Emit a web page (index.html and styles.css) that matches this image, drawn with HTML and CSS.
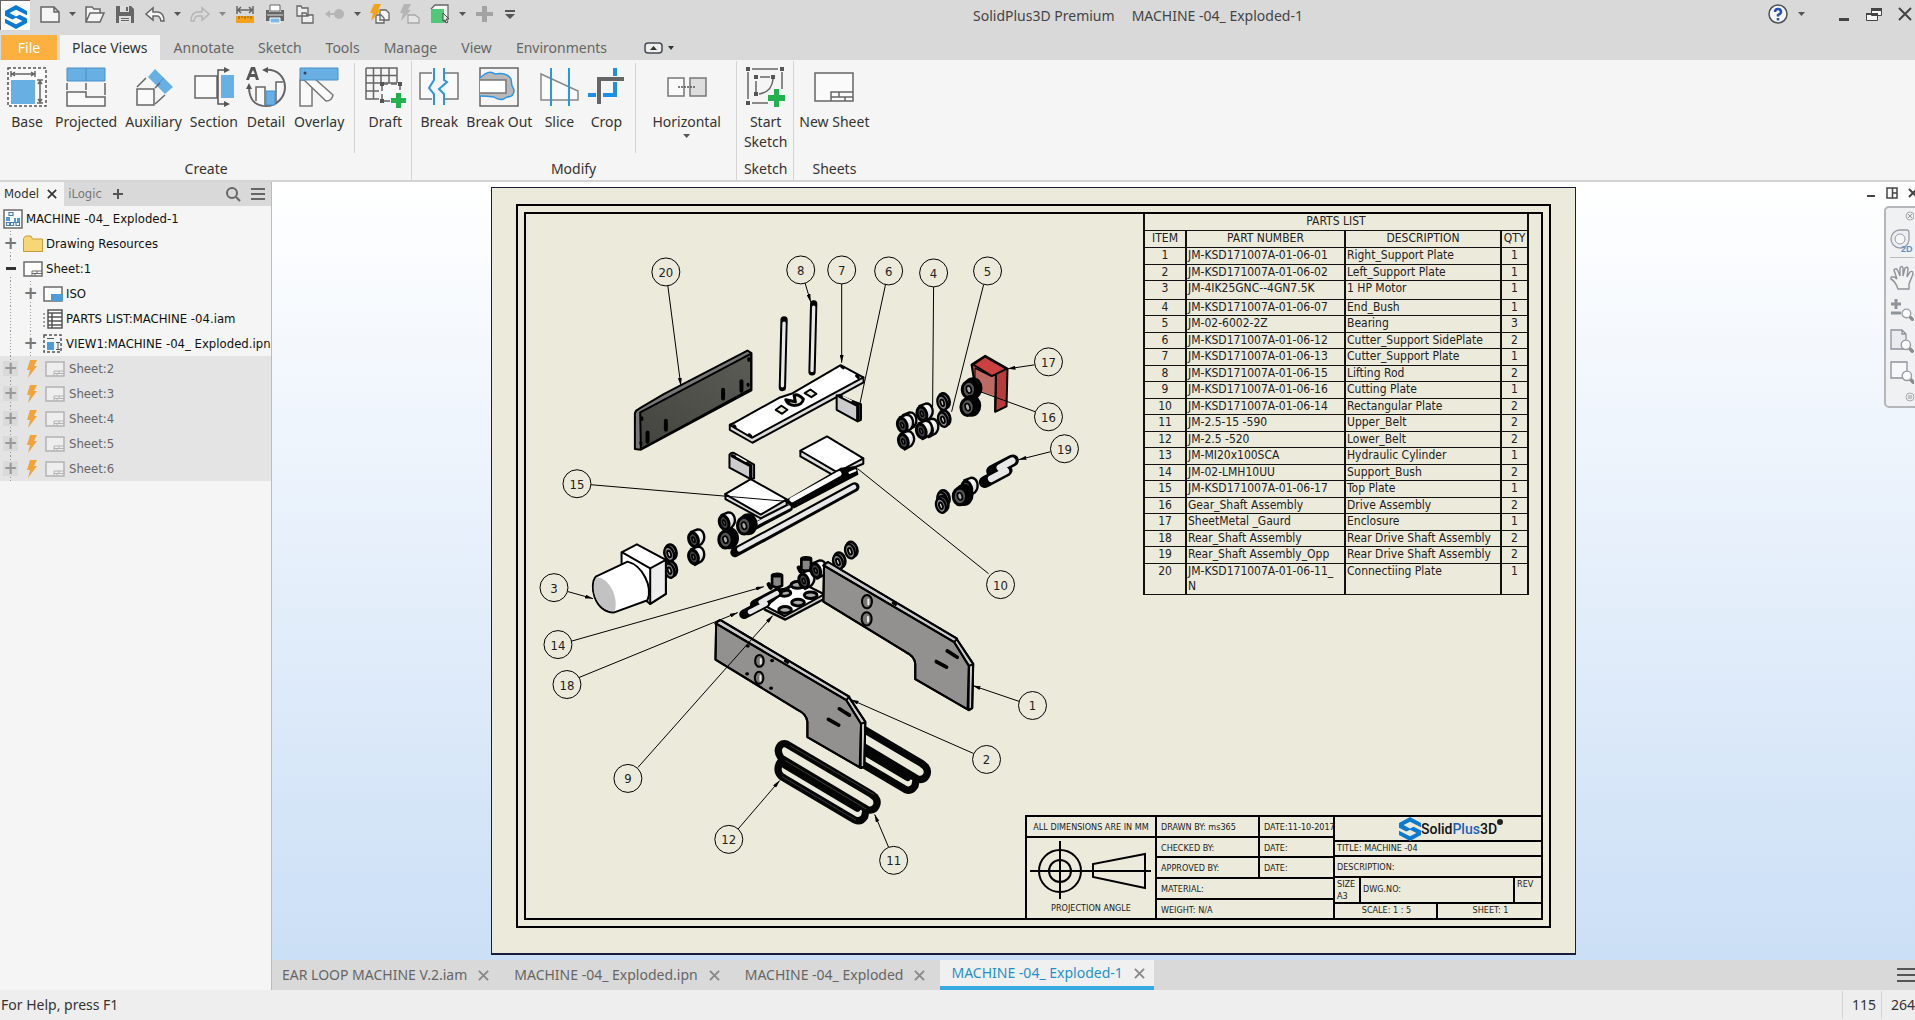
FILE: index.html
```html
<!DOCTYPE html>
<html lang="en">
<head>
<meta charset="utf-8">
<title>SolidPlus3D Premium - MACHINE -04_ Exploded-1</title>
<link rel="stylesheet" href="styles.css">
</head>
<body>
<svg class="defs" width="0" height="0" aria-hidden="true">
  <symbol id="logo" viewBox="0 0 24 26">
    <path fill="#0b7ad1" d="M12 0 24 6.500V11L12 5 5 8.700 12 12.500 16 10.500 24 14.500V19.500L12 26 0 19.500V15L12 21 19 17.300 12 13.800 8 15.600 0 11.500V6.500Z"/>
  </symbol>
  <symbol id="sheet" viewBox="0 0 20 16">
    <path fill="#fff" stroke="#6b6b6b" stroke-width="1.500" d="M1 1H19V15H1Z"/>
    <path fill="none" stroke="#6b6b6b" d="M9 15V10H19M9 12.500H19M14 10V12.500M12 12.500V15"/>
  </symbol>
  <symbol id="bolt" viewBox="0 0 12 18"><path fill="#f0a53c" d="M4 0H11L8 6H11L2 18 4 10H1Z"/></symbol>
  <symbol id="magnifier" viewBox="0 0 12 12"><path stroke="#8c8c8c" stroke-width="3" d="M8 8 11.500 11.500"/><circle cx="5" cy="5" r="4" fill="#f8fcfc" stroke="#9a9da0" stroke-width="1.200"/></symbol>
  <symbol id="cross" viewBox="0 0 12 12"><path fill="none" stroke="currentColor" stroke-width="2" d="M1 1 11 11M11 1 1 11"/></symbol>
</svg>

<div class="app">
  <header class="titlebar">
    <nav class="quick" aria-label="Quick access">
      <span class="brand"><svg width="22" height="24"><use href="#logo"/></svg></span>
      <button aria-label="New"><svg viewBox="0 0 20 20"><path fill="#f5f5f5" stroke="#666" stroke-width="1.500" d="M1 3H14L19 8V18H1ZM14 3V8H19"/></svg></button>
      <button class="caret" aria-label="New options"></button>
      <button aria-label="Open"><svg viewBox="0 0 20 20"><path fill="#f5f5f5" stroke="#666" stroke-width="1.500" d="M1 18V3H7L9 5H15V9H19L15 18ZM1 18 5 9H15"/></svg></button>
      <button aria-label="Save"><svg viewBox="0 0 20 20"><path fill="#666" d="M1 2H16L19 5V19H1Z"/><path fill="#ddd" d="M5 2H14V8H5ZM4 12H16V19H4Z"/><path fill="#666" d="M11 3H13V7H11ZM6 14H14V15H6ZM6 16H14V17H6Z"/></svg></button>
      <button aria-label="Undo"><svg viewBox="0 0 20 20"><path fill="#f5f5f5" stroke="#666" stroke-width="1.500" d="M1 10 8 4V8H13Q19 9 19 17H16Q15 12 12 12H8V16Z"/></svg></button>
      <button class="caret" aria-label="Undo options"></button>
      <button aria-label="Redo"><svg viewBox="0 0 20 20"><path fill="none" stroke="#b5b5b5" stroke-width="1.500" d="M19 10 12 4V8H7Q1 9 1 17H4Q5 12 8 12H12V16Z"/></svg></button>
      <button class="caret dim" aria-label="Redo options"></button>
      <button aria-label="Measure"><svg viewBox="0 0 20 20"><path fill="none" stroke="#666" stroke-width="1.500" d="M2 2V10M18 2V10M3 6H17M6 3 3 6 6 9M14 3 17 6 14 9"/><path fill="#f5a21b" d="M1 12H19V19H1Z"/><path stroke="#8a5b10" d="M4 12V15M7 12V14M10 12V15M13 12V14M16 12V15"/></svg></button>
      <button aria-label="Print"><svg viewBox="0 0 20 20"><path fill="#fff" stroke="#666" d="M5 1H15V7H5Z"/><path fill="#666" d="M1 6H4V8H16V6H19V17H1Z"/><path stroke="#ddd" d="M2 11H18"/><path fill="#7db8e8" stroke="#fff" d="M5 14H15V19H5Z"/></svg></button>
      <button aria-label="Windows"><svg viewBox="0 0 20 20"><path fill="#eee" stroke="#666" stroke-width="1.300" d="M2 2H6L7 4H13V12H2ZM7 9H11L12 11H18V19H7Z"/></svg></button>
      <button aria-label="Record"><svg viewBox="0 0 20 20"><circle cx="14" cy="10" r="5" fill="#b5b5b5"/><path fill="#b5b5b5" d="M0 10 5 6V9H9V11H5V14Z"/></svg></button>
      <button class="caret" aria-label="Record options"></button>
      <button aria-label="Update"><svg viewBox="0 0 20 20"><path fill="#f5f5f5" stroke="#666" stroke-width="1.300" d="M10 6H16L19 9V16H10ZM6 11H11L14 14V19H6Z"/><path fill="#f5a21b" d="M4 0H11L8 6H11L1 17 3 9H0Z"/></svg></button>
      <button aria-label="Update sheet"><svg viewBox="0 0 20 20"><path fill="#b5b5b5" d="M4 0H11L8 6H11L1 17 3 9H0Z"/><path fill="#e4e4e4" stroke="#a8a8a8" stroke-width="1.300" d="M8 11H15L19 14V19H8Z"/></svg></button>
      <button aria-label="Select"><svg viewBox="0 0 20 20"><path fill="#f5f5f5" stroke="#666" stroke-width="1.300" d="M1 5 5 1H18V14L14 18"/><path fill="#50c878" d="M1 5H14V19H1Z"/><path fill="#eee" stroke="#444" d="M13 9 19 15H16L18 18 16 19 15 16 13 17Z"/></svg></button>
      <button class="caret" aria-label="Select options"></button>
      <button aria-label="Add"><svg viewBox="0 0 20 20"><path fill="#a3a3a3" d="M7 2H12V8H18V12H12V18H7V12H1V8H7Z"/></svg></button>
      <button aria-label="Customize"><svg viewBox="0 0 20 20"><path fill="#555" d="M0 6H10V8H0ZM0 10H10L5 15Z"/></svg></button>
    </nav>
    <div class="caption"><span>SolidPlus3D Premium</span><span>MACHINE -04_ Exploded-1</span></div>
    <div class="winctl">
      <button aria-label="Help"><svg width="20" height="20"><circle cx="10" cy="10" r="9" fill="#f4f6fa" stroke="#4a4f58" stroke-width="1.500"/><path fill="none" stroke="#2951b4" stroke-width="2.500" d="M7 8Q7 5 10 5T13 8Q13 9.500 10 11V12.500"/><path stroke="#2951b4" stroke-width="2.500" d="M10 14V16.500"/></svg></button>
      <button class="caret" aria-label="Help options"></button>
      <button class="min" aria-label="Minimize"><svg width="12" height="16"><path fill="#444" d="M1 12H11V15H1Z"/></svg></button>
      <button aria-label="Restore"><svg width="16" height="16"><path fill="#f5f5f5" stroke="#444" d="M5.500 2.500H15.500V9.500H5.500ZM.5 7.500H11.500V14.500H.5Z"/><path fill="#444" d="M5 2H16V5H5ZM0 7H12V9H0Z"/></svg></button>
      <button aria-label="Close"><svg width="14" height="16"><path stroke="#444" stroke-width="2" d="M1 2 13 14M13 2 1 14"/></svg></button>
    </div>
  </header>

  <nav class="tabs" aria-label="Ribbon tabs">
    <button class="file">File</button>
    <button class="on">Place Views</button>
    <button>Annotate</button><button>Sketch</button><button>Tools</button><button>Manage</button><button>View</button><button>Environments</button>
    <button class="fold" aria-label="Collapse ribbon"><svg width="30" height="12"><rect x="1" y="1" width="17" height="10" rx="3" fill="#eee" stroke="#444b55" stroke-width="1.500"/><path fill="#333" d="M6 8 9.500 4 13 8ZM24 4H30L27 8Z"/></svg></button>
  </nav>

  <section class="ribbon">
    <div class="panel create">
      <div class="tools">
        <button><svg viewBox="0 0 40 40"><rect x="1" y="1" width="38" height="38" fill="#fafafa" stroke="#555" stroke-width="1.500" stroke-dasharray="3 2"/><path fill="#68afe4" d="M4 13H28V37H4Z"/><path fill="none" stroke="#666" stroke-width="1.500" d="M4 4V10M28 4V10M5 7H27M8 5 5 7 8 9M24 5 27 7 24 9M30 13H36M30 36H36M33 14V35M31 17 33 14 35 17M31 32 33 35 35 32"/></svg>Base</button>
        <button><svg viewBox="0 0 40 40"><path fill="#68afe4" stroke="#4b8fc8" d="M1 1H39V14H1ZM20 1V14"/><path fill="#fafafa" stroke="#666" stroke-width="1.500" d="M1 25H20V30H39V39H1Z"/><path stroke="#666" stroke-width="1.500" d="M1 16V23M20 16V23M39 16V28"/></svg>Projected</button>
        <button><svg viewBox="0 0 40 40"><path fill="#68afe4" d="M21 2 39 20 31 27 14 10Z"/><path stroke="#4b8fc8" d="M30 11 23 18"/><path fill="#fafafa" stroke="#666" stroke-width="1.500" d="M3 22H20V38H3Z"/><path stroke="#666" stroke-width="1.500" d="M3 20 12 11M21 21 26 16M21 37 31 28"/></svg>Auxiliary</button>
        <button><svg viewBox="0 0 40 40"><path fill="#fafafa" stroke="#666" stroke-width="1.500" d="M1 9H23V31H1Z"/><path fill="#68afe4" d="M27 8H40V31H27Z"/><path fill="none" stroke="#555" stroke-width="1.500" d="M34 3H24V37H34"/><path fill="#555" d="M30 0 36 3 30 6ZM30 34 36 37 30 40Z"/></svg>Section</button>
        <button><svg viewBox="0 0 40 40"><path fill="none" stroke="#666" stroke-width="2" d="M18 3C31 1 39 10 39 20S31 39 20 39 3 32 3 20"/><path fill="#555" d="M16 3 22 0V6ZM0 22 3 16 6 22ZM0 13 5 0H9L13 13H10L9 10H4L3 13ZM5 7H9L7 3Z"/><path fill="#fafafa" stroke="#666" stroke-width="1.500" d="M10 34V20H19V39M30 36V15H37"/><path fill="#68afe4" stroke="#4b8fc8" d="M20 24H29V38H20Z"/></svg>Detail</button>
        <button><svg viewBox="0 0 40 40"><path fill="#fafafa" stroke="#777" stroke-width="1.500" d="M1 13H13V39H1Z"/><path fill="#fafafa" stroke="#777" stroke-width="1.500" d="M4 12H16L34 28Q33 34 27 34Z"/><path fill="#68afe4" stroke="#4b8fc8" d="M1 1H39V13H1Z"/><circle cx="6" cy="6" r="1.500" fill="#345"/></svg>Overlay</button>
        <i class="rule"></i>
        <button><svg viewBox="0 0 40 40"><path fill="none" stroke="#666" stroke-width="1.500" d="M1 1H32V16M1 1V32H14M1 8.500H32M1 16H32M1 24H14M8.500 1V32M16 1V16M24 1V16"/><path fill="#fafafa" stroke="#666" stroke-dasharray="6 3" stroke-width="1.500" d="M17 17H35V34H17Z"/><path fill="#555" d="M15 15H19V19H15ZM33 15H37V19H33ZM15 32H19V36H15Z"/><path fill="#22b14c" d="M31 26H36V31H41V36H36V41H31V36H26V31H31Z"/></svg>Draft</button>
      </div>
      <h2>Create</h2>
    </div>
    <div class="panel modify">
      <div class="tools">
        <button><svg viewBox="0 0 40 40"><path fill="#fafafa" stroke="#777" stroke-width="1.500" d="M13 6H1V32H13M26 6H39V32H26"/><path fill="#fafafa" stroke="#2b95e8" stroke-width="2" d="M15 1V13L10 21 15 27V38M25 1V13L28 15 20 22 25 27V38"/></svg>Break</button>
        <button><svg viewBox="0 0 40 40"><path fill="#f5f5f5" stroke="#666" stroke-width="1.500" d="M1 1H39V39H1Z"/><path fill="#b9b9b9" stroke="#2b95e8" stroke-width="1.500" d="M1 11Q10 2 16 7 28 5 32 12 32 18 35 23 35 30 28 30 22 35 15 30 8 29 1 29"/><path fill="#fff" stroke="#777" stroke-width="1.500" d="M1 13H27V26H1"/></svg>Break Out</button>
        <button><svg viewBox="0 0 40 40"><path fill="#fafafa" stroke="#888" stroke-width="1.500" d="M2 7 39 24V33H2Z"/><path stroke="#2b95e8" stroke-width="2" d="M12 1V39M30 1V39"/></svg>Slice</button>
        <button><svg viewBox="0 0 40 40"><path fill="none" stroke="#1c8fe8" stroke-width="4" d="M29 1V9M29 15V28H17M10 28H2"/><path fill="none" stroke="#666" stroke-width="4" d="M13 37V12H38"/></svg>Crop</button>
        <i class="rule"></i>
        <button class="horiz"><svg viewBox="0 0 40 40"><path fill="#fafafa" stroke="#777" stroke-width="1.500" d="M1 11H17V29H1Z"/><path fill="#ddd" stroke="#777" stroke-width="1.500" d="M23 11H39V29H23Z"/><path stroke="#555" stroke-width="1.500" stroke-dasharray="2 1" d="M11 20H29"/></svg>Horizontal<span class="caret"></span></button>
      </div>
      <h2>Modify</h2>
    </div>
    <div class="panel sketch">
      <div class="tools">
        <button><svg viewBox="0 0 40 40"><path fill="none" stroke="#666" stroke-width="1.500" d="M2 5V32M6 2H32M36 5V22M6 36H22M10 14V25M14 10H24M27 12Q26 25 13 27"/><path fill="#555" d="M0 0H4V4H0ZM34 0H38V4H34ZM0 34H4V38H0ZM8 8H12V12H8ZM25 8H29V12H25ZM8 25H12V29H8Z"/><path fill="#22b14c" d="M28 22H33V28H39V34H33V40H28V34H22V28H28Z"/></svg>Start<br>Sketch</button>
      </div>
      <h2>Sketch</h2>
    </div>
    <div class="panel sheets">
      <div class="tools">
        <button><svg viewBox="0 0 40 40"><path fill="#fafafa" stroke="#666" stroke-width="1.500" d="M1 6H39V34H1Z"/><path fill="none" stroke="#666" stroke-width="1.500" d="M17 34V25H39M17 30H39M25 25V30M31 30V34"/></svg>New Sheet</button>
      </div>
      <h2>Sheets</h2>
    </div>
  </section>

  <main class="work">
    <aside class="browser">
      <div class="browser-tabs">
        <button class="on">Model <svg width="10" height="10"><use href="#cross"/></svg></button>
        <button>iLogic</button>
        <button aria-label="Add tab"><svg width="12" height="12"><path stroke="#555" stroke-width="2" d="M6 1V11M1 6H11"/></svg></button>
        <span class="grow"></span>
        <button aria-label="Search"><svg width="16" height="16"><circle cx="7" cy="7" r="5" fill="none" stroke="#666" stroke-width="2"/><path stroke="#666" stroke-width="2" d="M11 11 15 15"/></svg></button>
        <button aria-label="Menu"><svg width="14" height="12"><path stroke="#666" stroke-width="2" d="M0 1H14M0 6H14M0 11H14"/></svg></button>
      </div>
      <ul class="tree">
        <li class="root"><svg width="20" height="20" viewBox="0 0 20 20"><path fill="#fff" stroke="#6b6b6b" stroke-width="1.500" d="M1 1H19V19H1Z"/><path fill="#4d9ddb" d="M3 8H7V12H3ZM11 9H13V14H11ZM14 9H17V13H14Z"/><path fill="none" stroke="#4f7fb0" stroke-width="1.200" d="M6 3.500H10V6.500H6ZM3.500 13.500H6.500V16.500H3.500ZM7.500 13.500H10.500V16.500H7.500ZM13 13.500H16.500V16.500H13Z"/></svg>MACHINE -04_ Exploded-1</li>
        <li class="l1"><button class="tog" aria-label="Expand">+</button><svg width="20" height="18"><path fill="#f7d675" stroke="#c79a3a" d="M.5 3.500 2.500 1H8L9.500 4H19.500V16.500H.5Z"/></svg>Drawing Resources</li>
        <li class="l1"><button class="tog minus" aria-label="Collapse"></button><svg width="20" height="16"><use href="#sheet"/></svg>Sheet:1</li>
        <li class="l2"><button class="tog" aria-label="Expand">+</button><svg width="20" height="16"><path fill="#fff" stroke="#6b6b6b" stroke-width="1.500" d="M1 1H19V15H1Z"/><path fill="#4d9ddb" d="M8 8H20V15H8Z"/></svg>ISO</li>
        <li class="l2"><span class="stub"></span><svg width="20" height="20"><path fill="#fff" stroke="#555" stroke-width="1.500" d="M5 1H19V19H5Z"/><path stroke="#555" stroke-width="1.500" d="M5 4H19M5 8H19M5 12H19M5 16H19M9 4V19"/><path stroke="#555" stroke-dasharray="2 2" d="M1 4V18"/></svg>PARTS LIST:MACHINE -04.iam</li>
        <li class="l2"><button class="tog" aria-label="Expand">+</button><svg width="20" height="20"><path fill="none" stroke="#555" stroke-dasharray="3 2" stroke-width="1.500" d="M1 1H18V18H1Z"/><path fill="#4d9ddb" d="M4 8H11V16H4Z"/><path stroke="#555" d="M4 4.500H11M13 8.500H17M13 15.500H17M15 9V15"/></svg>VIEW1:MACHINE -04_ Exploded.ipn</li>
        <li class="l1 off"><button class="tog" aria-label="Expand">+</button><svg class="bolt" width="12" height="18"><use href="#bolt"/></svg><svg class="pale" width="20" height="16"><use href="#sheet"/></svg>Sheet:2</li>
        <li class="l1 off"><button class="tog" aria-label="Expand">+</button><svg class="bolt" width="12" height="18"><use href="#bolt"/></svg><svg class="pale" width="20" height="16"><use href="#sheet"/></svg>Sheet:3</li>
        <li class="l1 off"><button class="tog" aria-label="Expand">+</button><svg class="bolt" width="12" height="18"><use href="#bolt"/></svg><svg class="pale" width="20" height="16"><use href="#sheet"/></svg>Sheet:4</li>
        <li class="l1 off"><button class="tog" aria-label="Expand">+</button><svg class="bolt" width="12" height="18"><use href="#bolt"/></svg><svg class="pale" width="20" height="16"><use href="#sheet"/></svg>Sheet:5</li>
        <li class="l1 off"><button class="tog" aria-label="Expand">+</button><svg class="bolt" width="12" height="18"><use href="#bolt"/></svg><svg class="pale" width="20" height="16"><use href="#sheet"/></svg>Sheet:6</li>
      </ul>
    </aside>

    <section class="view">
      <div class="canvas">
        <article class="sheet">
          <div class="border"><div class="frame">
            <svg class="drawing" viewBox="525 214 1016 705" role="img" aria-label="Exploded view of MACHINE -04">
              <defs>
                <marker id="arrow" viewBox="0 0 8 4" refX="8" refY="2" markerWidth="8" markerHeight="4" orient="auto"><path d="M0 0 8 2 0 4Z"/></marker>
                <linearGradient id="steel" x1="0" y1="0" x2="1" y2="1"><stop offset="0" stop-color="#aaa"/><stop offset=".4" stop-color="#fff"/><stop offset="1" stop-color="#bbb"/></linearGradient>
                <linearGradient id="dark" x1="0" y1="1" x2="1" y2="0"><stop offset="0" stop-color="#44443f"/><stop offset="1" stop-color="#5c5c57"/></linearGradient>
                <g id="bush"><path fill="url(#steel)" stroke="#000" stroke-width="7" d="M-8-23 12-31C31-31 40-5 24 13L4 24Z"/><ellipse rx="14" ry="21" fill="#444" stroke="#000" stroke-width="9" transform="rotate(-18)"/><ellipse rx="4" ry="8" fill="#777" stroke="#000" stroke-width="5" transform="rotate(-18)"/></g>
                <g id="ring"><ellipse cx="7" cy="-4" rx="16" ry="23" fill="#777" stroke="#000" stroke-width="8" transform="rotate(-18)"/><ellipse rx="14" ry="22" fill="#888" stroke="#000" stroke-width="7" transform="rotate(-18)"/><ellipse rx="5" ry="10" fill="#ddd" stroke="#000" stroke-width="6" transform="rotate(-18)"/></g>
                <g id="gear"><ellipse cx="12" cy="-4" rx="26" ry="30" stroke="#000" stroke-width="6"/><ellipse rx="20" ry="25" fill="#555" stroke="#000" stroke-width="9"/><ellipse rx="7" ry="11" fill="#aaa" stroke="#000" stroke-width="5" transform="rotate(-18)"/></g>
                <g id="plate"><path fill="#c9c9c9" d="M103 252 118 241 503 470 554 547 551 680 541 686Z"/><path fill="#929190" d="M106 252 497 482 541 553 537 684 380 593V547C378 530 366 518 352 512L104 360Z"/><path fill="none" d="M118 241 503 470 554 547 551 680 541 686 380 593V547C378 530 366 518 352 512L104 360 106 248ZM106 252 497 482 541 553 540 685M497 482 506 471M541 553 554 548"/><path stroke-width="11" d="M476 508 506 527M443 540 474 557"/><path stroke-width="8" d="M313 364 321 369"/></g>
                <g id="belt" fill="none" stroke="#050505" stroke-width="22"><path d="M296 672C286 694 296 709 310 716L523 842Q540 850 552 832L556 812"/><path d="M318 614C300 606 282 630 301 656L560 811C586 818 596 790 584 774L572 764Z"/><path d="M312 676 530 806"/></g>
                <g id="slab"><path fill="#ddd" d="M597 555V570L665 609 999 428 998 412Z"/><path fill="#fff" d="M598 556 745 474 782 462 930 376 998 413 663 594Z"/></g>
              </defs>

              <g class="solid" transform="translate(530 240) scale(.3333)">
                <path fill="#777" d="M312 520Q316 510 326 506L400 462 650 332 662 340V452L330 630 312 628Z"/>
                <path fill="url(#dark)" d="M328 518 661 341V447L330 628Z"/>
                <path stroke-width="12" d="M350 578V606M405 543V570M577 450V476M632 424V453"/><path stroke-width="9" d="M333 534V539M330 608V612M654 357V362M652 433V437"/>
                <path class="rod" d="M760 240 755 443M849 192 844 396"/><path class="rodin" d="M760 250 755 438M849 202 844 392"/>
                <use href="#slab"/>
                <path stroke-width="9" d="M610 558 613 562M655 585 660 589M933 380 938 384M978 408 983 413"/>
                <path fill="#ebeadb" d="M735 510 752 498 770 510 754 522ZM822 460 839 449 857 462 842 472Z"/><path fill="#ebeadb" stroke-width="9" d="M765 480C775 505 815 500 818 478Q803 462 790 466L794 486Z"/>
                <path fill="#ccc" d="M918 466 991 493V540L981 545 918 510Z"/><path fill="none" stroke-width="11" d="M926 468 982 497V540"/>
                <path fill="#ccc" d="M596 645Q600 637 610 640L670 675V716L657 717 596 684Z"/><path fill="none" stroke-width="10" d="M604 648 660 678V715"/><path stroke="#fff" stroke-width="4" d="M618 649 646 665M938 471 962 483"/>
                <path fill="#ddd" d="M809 634V650L910 708 998 672V656Z"/><path fill="#fff" d="M809 633 889 590 998 656 920 698Z"/>
                <path fill="#ddd" d="M584 764V778L690 836 768 796V780Z"/><path fill="#fff" d="M583 763 660 718 768 779 690 825Z"/>
              </g>

              <g class="solid" transform="translate(530 440) scale(.3333)">
                <path d="M765 184 930 87 976 82 980 103 790 203Z"/><path stroke="#fff" stroke-width="15" d="M784 180 925 102"/><path stroke="#fff" stroke-width="7" d="M957 99 974 92"/>
                <path class="rod" d="M675 258 775 205"/><path class="rodin" d="M670 256 775 202"/>
                <path class="rod wide" d="M613 338 972 142"/><path class="rodin wide" d="M626 329 970 142"/>
                <use href="#gear" x="640" y="258"/><use href="#gear" x="584" y="300"/><use href="#bush" x="580" y="249"/>
                <use href="#bush" x="488" y="300"/><use href="#bush" x="488" y="352"/>
                <use href="#ring" x="415" y="343"/><use href="#ring" x="416" y="393"/>
                <path fill="#fff" d="M272 338 318 314 405 361V463L358 493 348 485 272 400Z"/><path fill="#eee" d="M358 386 405 361V463L358 493Z"/><path fill="none" d="M274 338 358 386"/>
                <path fill="#fff" d="M196 410 290 366C335 378 366 440 350 482L248 519C190 515 172 435 196 410Z"/><path fill="#c2c2c2" stroke="none" d="M196 414C228 410 264 465 252 514 200 520 174 448 196 414Z"/>
                <use href="#ring" x="922" y="367"/><use href="#ring" x="958" y="335"/>
                <path fill="#ccc" stroke-width="7" d="M702 510 764 540 880 478V464L800 424 700 490Z"/><path fill="#fff" d="M706 500 800 424 880 464 762 530Z"/>
                <g fill="#aaa" stroke-width="9"><ellipse cx="800" cy="436" rx="19" ry="10"/><ellipse cx="840" cy="467" rx="19" ry="10"/><ellipse cx="802" cy="489" rx="19" ry="10"/><ellipse cx="763" cy="511" rx="19" ry="10"/><ellipse cx="761" cy="460" rx="19" ry="10"/></g>
                <path class="rod wide" d="M640 524 705 490M672 495 742 458"/><path class="rodin wide" d="M658 517 705 492M690 487 738 461"/>
                <path fill="#888" stroke-width="8" d="M724 407Q738 399 754 407V438Q738 448 724 438ZM812 357Q826 349 841 357V390Q826 398 812 390Z"/><path stroke-width="13" d="M728 407H750M816 357H838M714 434 720 444M804 384 809 394M750 454 765 450"/>
                <use href="#bush" x="819" y="424"/><use href="#bush" x="855" y="393"/>
              </g>

              <g class="solid" transform="translate(860 240) scale(.3333)">
                <path fill="#b83a3a" d="M333 374 374 348 441 386 438 500 404 516 406 404 391 411 345 386V450L333 374Z"/><path fill="#bd6a66" stroke="none" d="M345 388 391 411 404 404V470L345 450Z"/><path fill="#cb4040" d="M338 374 374 350 438 387 394 409Z"/><path fill="none" d="M406 404 404 514"/>
                <use href="#gear" x="325" y="449"/><use href="#gear" x="321" y="502"/>
                <use href="#ring" x="245" y="489"/><use href="#ring" x="247" y="540"/>
                <use href="#bush" x="184" y="522"/><use href="#bush" x="201" y="568"/><use href="#bush" x="182" y="574"/><use href="#bush" x="135" y="549"/><use href="#bush" x="125" y="556"/><use href="#bush" x="128" y="605"/>
                <path class="rod thick" d="M373 727 438 692M395 694 457 662"/><path class="rodin thick" d="M392 717 436 694M418 684 455 663"/>
                <use href="#bush" x="319" y="745"/><use href="#gear" x="298" y="770"/><use href="#ring" x="245" y="780"/><use href="#ring" x="241" y="798"/>
              </g>

              <g class="solid" transform="translate(680 540) scale(.3333)">
                <use href="#belt" x="151" y="-92"/>
                <use href="#plate" x="324" y="-174"/><use href="#plate"/>
                <use href="#belt"/><path fill="none" stroke="#3a3a38" stroke-width="3" d="M330 620 580 765M315 664 555 808M305 712 525 842"/>
                <g fill="#777"><ellipse cx="236" cy="364" rx="13" ry="18"/><ellipse cx="235" cy="415" rx="13" ry="18"/><ellipse cx="559" cy="186" rx="15" ry="20"/><ellipse cx="558" cy="238" rx="15" ry="20"/></g>
                <path stroke="#ebeadb" stroke-width="6" d="M240 358V372M239 409V423M563 180V194M562 232V246"/>
                <path stroke-width="10" d="M200 319H202M273 363H275M198 403H200M270 446H272"/>
              </g>

              <g class="leader">
                <path d="M885 284 859 405M933 286 932 407M983 285 951 412M1035 412 980 392M988 574 857 469M590 485 790 502"/>
                <g class="tips"><path d="M667 286 680 386"/><path d="M804 282 810 302"/><path d="M841 283V363"/><path d="M1034 365 1007 369"/><path d="M1050 452 1018 460"/><path d="M567 592 592 599"/><path d="M569 642 763 587"/><path d="M578 678 737 613"/><path d="M637 768 772 616"/><path d="M1019 702 972 686"/><path d="M973 754 850 700"/><path d="M737 830 779 781"/><path d="M888 848 874 815"/></g>
              </g>
              <g class="balloon">
                <circle cx="665" cy="272" r="14"/><text x="665" y="277">20</text>
                <circle cx="800" cy="270" r="14"/><text x="800" y="275">8</text>
                <circle cx="841" cy="270" r="14"/><text x="841" y="275">7</text>
                <circle cx="888" cy="271" r="14"/><text x="888" y="276">6</text>
                <circle cx="933" cy="273" r="14"/><text x="933" y="278">4</text>
                <circle cx="987" cy="271" r="14"/><text x="987" y="276">5</text>
                <circle cx="1048" cy="362" r="14"/><text x="1048" y="367">17</text>
                <circle cx="1048" cy="417" r="14"/><text x="1048" y="422">16</text>
                <circle cx="1064" cy="449" r="14"/><text x="1064" y="454">19</text>
                <circle cx="576" cy="484" r="14"/><text x="576" y="489">15</text>
                <circle cx="1000" cy="585" r="14"/><text x="1000" y="590">10</text>
                <circle cx="553" cy="588" r="14"/><text x="553" y="593">3</text>
                <circle cx="557" cy="645" r="14"/><text x="557" y="650">14</text>
                <circle cx="566" cy="685" r="14"/><text x="566" y="690">18</text>
                <circle cx="1032" cy="706" r="14"/><text x="1032" y="711">1</text>
                <circle cx="986" cy="760" r="14"/><text x="986" y="765">2</text>
                <circle cx="627" cy="779" r="14"/><text x="627" y="784">9</text>
                <circle cx="728" cy="840" r="14"/><text x="728" y="845">12</text>
                <circle cx="893" cy="861" r="14"/><text x="893" y="866">11</text>
              </g>
            </svg>

            <table class="parts">
              <caption>PARTS LIST</caption>
              <thead><tr><th>ITEM</th><th>PART NUMBER</th><th>DESCRIPTION</th><th>QTY</th></tr></thead>
              <tbody>
                <tr><td>1</td><td>JM-KSD171007A-01-06-01</td><td>Right_Support Plate</td><td>1</td></tr>
                <tr><td>2</td><td>JM-KSD171007A-01-06-02</td><td>Left_Support Plate</td><td>1</td></tr>
                <tr class="tall"><td>3</td><td>JM-4IK25GNC--4GN7.5K</td><td>1 HP Motor</td><td>1</td></tr>
                <tr><td>4</td><td>JM-KSD171007A-01-06-07</td><td>End_Bush</td><td>1</td></tr>
                <tr><td>5</td><td>JM-02-6002-2Z</td><td>Bearing</td><td>3</td></tr>
                <tr><td>6</td><td>JM-KSD171007A-01-06-12</td><td>Cutter_Support SidePlate</td><td>2</td></tr>
                <tr><td>7</td><td>JM-KSD171007A-01-06-13</td><td>Cutter_Support Plate</td><td>1</td></tr>
                <tr><td>8</td><td>JM-KSD171007A-01-06-15</td><td>Lifting Rod</td><td>2</td></tr>
                <tr><td>9</td><td>JM-KSD171007A-01-06-16</td><td>Cutting Plate</td><td>1</td></tr>
                <tr><td>10</td><td>JM-KSD171007A-01-06-14</td><td>Rectangular Plate</td><td>2</td></tr>
                <tr><td>11</td><td>JM-2.5-15 -590</td><td>Upper_Belt</td><td>2</td></tr>
                <tr><td>12</td><td>JM-2.5 -520</td><td>Lower_Belt</td><td>2</td></tr>
                <tr><td>13</td><td>JM-MI20x100SCA</td><td>Hydraulic Cylinder</td><td>1</td></tr>
                <tr><td>14</td><td>JM-02-LMH10UU</td><td>Support_Bush</td><td>2</td></tr>
                <tr><td>15</td><td>JM-KSD171007A-01-06-17</td><td>Top Plate</td><td>1</td></tr>
                <tr><td>16</td><td>Gear_Shaft Assembly</td><td>Drive Assembly</td><td>2</td></tr>
                <tr><td>17</td><td>SheetMetal _Gaurd</td><td>Enclosure</td><td>1</td></tr>
                <tr><td>18</td><td>Rear_Shaft Assembly</td><td>Rear Drive Shaft Assembly</td><td>2</td></tr>
                <tr><td>19</td><td>Rear_Shaft Assembly_Opp</td><td>Rear Drive Shaft Assembly</td><td>2</td></tr>
                <tr class="last"><td>20</td><td>JM-KSD171007A-01-06-11_<br>N</td><td>Connectiing Plate</td><td>1</td></tr>
              </tbody>
            </table>

            <div class="titleblock">
              <div class="projection">
                <p>ALL DIMENSIONS ARE IN MM</p>
                <svg viewBox="0 4 128 62"><g fill="none" stroke="#000" stroke-width="2"><circle cx="33" cy="37" r="21"/><circle cx="33" cy="37" r="11"/><path d="M33 7V65M3 37H124M66 30V43L118 54V20Z"/></g></svg>
                <p>PROJECTION ANGLE</p>
              </div>
              <div class="signoff">
                <p>DRAWN BY: ms365</p><p>DATE:11-10-2017</p>
                <p>CHECKED BY:</p><p>DATE:</p>
                <p>APPROVED BY:</p><p>DATE:</p>
                <p class="wide">MATERIAL:</p>
                <p class="wide">WEIGHT: N/A</p>
              </div>
              <div class="ident">
                <div class="maker"><svg width="22" height="24"><use href="#logo"/></svg><span>Solid<b>Plus</b>3D</span><i></i></div>
                <p>TITLE: MACHINE -04</p>
                <p>DESCRIPTION:</p>
                <div class="dwg"><p>SIZE<br>A3</p><p>DWG.NO:</p><p>REV</p></div>
                <div class="scale"><p>SCALE: 1 : 5</p><p>SHEET: 1</p></div>
              </div>
            </div>
          </div></div>
        </article>
        <div class="side">
          <div class="docctl">
            <button aria-label="Minimize sheet"><svg width="9" height="12"><path fill="#444" d="M0 8H8V10H0Z"/></svg></button>
            <button aria-label="Tile sheets"><svg width="12" height="12"><path fill="none" stroke="#444" stroke-width="1.500" d="M1 1H11V11H1ZM6.500 1V11M6.500 6H11"/></svg></button>
            <button aria-label="Close sheet"><svg width="10" height="12"><path stroke="#444" stroke-width="2" d="M1 2 9 10M9 2 1 10"/></svg></button>
          </div>
          <div class="navbar">
            <button aria-label="Close navigation bar"><svg width="10" height="10"><circle cx="5" cy="5" r="4" fill="#eee" stroke="#aaa"/><path stroke="#999" d="M3 3 7 7M7 3 3 7"/></svg></button>
            <button class="wheel" aria-label="Steering wheel 2D"><svg width="24" height="24"><path fill="#eceef2" stroke="#999da5" stroke-width="1.300" d="M10 1H17Q19 1 19 4V11A9 9 0 1 1 10 1Z"/><circle cx="10" cy="10" r="5" fill="#f6f6f6" stroke="#999da5"/><text x="11" y="23" class="two-d">2D</text></svg></button>
            <button aria-label="Pan"><svg width="24" height="25"><path fill="#f3f3f3" stroke="#8f939a" stroke-width="1.400" d="M8 24C6 18 3 15 1 14 0 11 4 11 7 14L4 5Q6 2 8 6L10 11V3Q12 0 13 3V11L15 3Q18 1 18 4L17 12 20 7Q23 5 23 9L19 19V24Z"/></svg></button>
            <button aria-label="Zoom"><svg width="24" height="24"><path stroke="#8f939a" stroke-width="3" d="M6 1V11M1 6H11M1 15H11"/><use href="#magnifier" x="11" y="10" width="13" height="13"/></svg></button>
            <button aria-label="Zoom all"><svg width="24" height="24"><path fill="#e9ebf0" stroke="#8f939a" stroke-width="1.300" d="M1 1H12L16 5V20H1ZM12 1V5H16"/><use href="#magnifier" x="10" y="10" width="14" height="14"/></svg></button>
            <button aria-label="Zoom window"><svg width="24" height="24"><path fill="#f6f7f9" stroke="#8f939a" stroke-width="1.300" d="M1 1H17V17H1Z"/><use href="#magnifier" x="11" y="9" width="14" height="14"/></svg></button>
            <button aria-label="Navigation options"><svg width="10" height="10"><circle cx="5" cy="5" r="4" fill="#eee" stroke="#aaa"/><path stroke="#999" d="M3 4H7M3 6H7"/></svg></button>
          </div>
        </div>
      </div>
      <nav class="doctabs" aria-label="Open documents">
        <button>EAR LOOP MACHINE V.2.iam<svg width="11" height="11"><use href="#cross"/></svg></button>
        <button>MACHINE -04_ Exploded.ipn<svg width="11" height="11"><use href="#cross"/></svg></button>
        <button>MACHINE -04_ Exploded<svg width="11" height="11"><use href="#cross"/></svg></button>
        <button class="on">MACHINE -04_ Exploded-1<svg width="11" height="11"><use href="#cross"/></svg></button>
        <span class="grow"></span>
        <button class="menu" aria-label="Document list"><svg width="18" height="16"><path stroke="#555" stroke-width="2" d="M0 2H18M0 8H18M0 14H18"/></svg></button>
      </nav>
    </section>
  </main>

  <footer class="status"><span class="grow">For Help, press F1</span><span class="num">115</span><span class="num end">264</span></footer>
</div>
</body>
</html>
```

FILE: styles.css
```css
* { box-sizing: border-box; }
body { margin: 0; background: #eee; color: #333; font: 14px/20px "Noto Sans", "Open Sans", sans-serif; }
button { margin: 0; padding: 0; border: 0; background: none; color: inherit; font: inherit; cursor: default; }
p, h2, ul { margin: 0; padding: 0; }
svg { display: block; flex: none; }
.defs { position: absolute; }
.grow { flex: 1; }
.app { display: flex; flex-direction: column; min-height: 100vh; overflow: hidden; }

.caret { flex: none; display: flex; align-items: center; justify-content: center; width: 5px; height: 20px; }
.caret::before { content: ""; flex: none; width: 7px; height: 4px; background: #555; clip-path: polygon(0 0, 100% 0, 50% 100%); }
.caret.dim::before { background: #888; }

/* Title bar */
.titlebar { display: grid; grid-template-columns: 973px 1fr auto; background: #d9d9d9; height: 35px; }
.quick { display: flex; align-items: center; gap: 10px; height: 28px; }
.quick button svg { width: 20px; height: 20px; }
.brand { width: 30px; height: 30px; padding: 4px; background: #fff; border: solid #666; border-width: 1px 0 0 1px; align-self: flex-start; }
.caption { display: flex; gap: 17px; padding-top: 6px; color: #444; white-space: nowrap; }
.winctl { display: flex; align-items: center; gap: 16px; height: 28px; padding: 0 3px 0 0; }
.winctl .caret { margin-left: -5px; }
.winctl .min { margin-left: 18px; }

/* Ribbon */
.tabs { display: flex; height: 25px; background: #d9d9d9; color: #666; padding-left: 1px; }
.tabs button { padding: 0 12px; }
.tabs .file { width: 56px; background: #fbb040; color: #fff; }
.tabs .on { background: #f5f5f5; color: #333; margin: 0 2px 0 3px; }
.tabs .fold { padding-left: 25px; }
.ribbon { display: flex; height: 122px; background: #f5f5f5; border-bottom: 2px solid #d4d4d4; }
.panel { display: flex; flex-direction: column; justify-content: space-between; padding: 6px 6px 0 7px; margin-top: 1px; border-right: 1px solid #d4d4d4; }
.panel.modify { padding-right: 8px; }
.panel:last-child { padding-left: 5px; border: 0; }
.panel h2 { font: inherit; text-align: center; line-height: 22px; }
.tools { display: flex; align-items: flex-start; gap: 7px; height: 88px; white-space: nowrap; }
.create .tools { gap: 8px; }
.tools button { display: flex; flex-direction: column; align-items: center; min-width: 40px; }
.tools svg { width: 40px; height: 40px; margin-bottom: 5px; overflow: visible; }
.rule { width: 1px; height: 90px; margin: -4px 2px 0; background: #d4d4d4; }
.tools .caret { height: 8px; }
.horiz { margin: 0 7px; }

/* Model browser */
.work { display: flex; flex: 1; }
.browser { width: 272px; background: #f5f5f5; border-right: 1px solid #bbb; font: 13px/25px "DejaVu Sans Condensed", "Noto Sans", sans-serif; color: #111; }
.browser-tabs { display: flex; align-items: center; gap: 10px; height: 24px; background: #d9d9d9; padding-right: 6px; color: #777; line-height: 24px; }
.browser-tabs button { display: flex; align-items: center; gap: 8px; }
.browser-tabs .on { background: #f5f5f5; color: #333; padding: 0 7px 0 4px; margin-right: -6px; }
.tree { list-style: none; }
.tree li { display: flex; align-items: center; height: 25px; white-space: nowrap; gap: 3px; }
.tree .root { padding-left: 3px; gap: 3px; }
.tree .l1 { padding-left: 3px; background: repeating-linear-gradient(#999 0 1px, transparent 1px 3px) 10px 0 / 1px 100% no-repeat; }
.tree .l2 { padding-left: 23px; background: repeating-linear-gradient(#999 0 1px, transparent 1px 3px) 10px 0 / 1px 100% no-repeat, repeating-linear-gradient(#999 0 1px, transparent 1px 3px) 30px 0 / 1px 100% no-repeat; }
.tree .off { background-color: #e4e4e4; color: #666; gap: 7px; }
.off .tog { background: #dadada; color: #999; margin-right: 1px; }
.off .pale { margin-right: -3px; opacity: .4; }
.tog { width: 15px; height: 15px; margin-right: 2px; background: #f5f5f5; color: #777; font: bold 17px/15px "DejaVu Sans", sans-serif; display: grid; place-items: center; }
.tog.minus::before { content: ""; width: 10px; height: 3px; background: #333; }
.stub { width: 17px; }

/* Drawing canvas */
.view { flex: 1; min-width: 0; display: flex; flex-direction: column; }
.canvas { flex: 1; display: grid; grid-template-columns: 219fr 1085fr 339fr; padding: 5px 0; background: linear-gradient(#fff, #cbdff6); }
.sheet { grid-column: 2; padding: 16px 24px 25px; background: #ebeadb; border: 1px solid #1c1c3c; border-bottom-width: 2px; font-family: "DejaVu Sans Condensed", "Noto Sans", sans-serif; color: #222; align-self: start; }
.border { border: 2px solid #000; padding: 6px; }
.frame { display: grid; border: 2px solid #000; }
.frame > * { grid-area: 1 / 1; }
.drawing { width: 100%; overflow: visible; }
.solid { stroke: #000; stroke-width: 6; stroke-linejoin: round; stroke-linecap: round; }
.rod { fill: none; stroke: #000; stroke-width: 22; }
.rodin { fill: none; stroke: #e8e8e8; stroke-width: 10; }
.rod.wide { stroke-width: 29; }
.rodin.wide { stroke-width: 14; }
.rod.thick { stroke-width: 36; }
.rodin.thick { stroke-width: 20; }
.leader { fill: none; stroke: #000; stroke-width: 1; }
.tips path { marker-end: url(#arrow); }
.balloon circle { fill: #ebeadb; stroke: #000; stroke-width: 1; }
.balloon text { font-size: 13px; text-anchor: middle; fill: #222; }

.parts { justify-self: end; align-self: start; width: 386px; margin-right: 12px; table-layout: fixed; border-collapse: collapse; font-size: 12px; line-height: 15px; color: #222; }
.parts caption { height: 16px; border: solid #111; border-width: 0 2px; }
.parts th, .parts td { padding: 0 0 0 1px; border: 1px solid #111; border-width: 1px 2px; font-weight: 400; text-align: left; vertical-align: top; white-space: nowrap; }
.parts tr { height: 17px; }
.parts tbody tr:nth-child(even) { height: 16px; }
.parts .tall { height: 19px; }
.parts tbody .last { height: 33px; }
.parts th, .parts td:first-child, .parts td:last-child { text-align: center; padding: 0; }
.parts th:nth-child(1) { width: 42px; }
.parts th:nth-child(2) { width: 159px; }
.parts th:nth-child(4) { width: 27px; }

.titleblock { justify-self: end; align-self: end; display: grid; grid-template-columns: 128px 180px 206px; border: solid #000; border-width: 2px 0 0 2px; font-size: 9px; line-height: 12px; }
.titleblock p { padding-left: 4px; white-space: nowrap; }
.projection { display: flex; flex-direction: column; text-align: center; }
.projection p { padding: 2px 0 4px; }
.projection p:first-child { border-bottom: 2px solid #000; padding: 4px 0 3px; height: 21px; }
.signoff { display: grid; grid-template-columns: 103px 73px; grid-template-rows: 21px 20px 21px 21px 18px; border: solid #000; border-width: 0 2px; }
.signoff p { padding-top: 4px; border-bottom: 2px solid #000; }
.signoff p:nth-child(-n+6):nth-child(odd) { border-right: 2px solid #000; }
.signoff .wide { grid-column: 1 / 3; }
.signoff .wide:last-child { border-bottom: 0; }
.ident > * { border-bottom: 2px solid #000; }
.titleblock .ident p { padding-left: 2px; }
.ident > p { height: 15px; }
.ident > p + p { height: 21px; padding-top: 4px; }
.maker { display: flex; align-items: center; justify-content: center; height: 25px; padding-left: 26px; font: 500 14px/22px Roboto, "Liberation Sans", sans-serif; color: #111; }
.maker b { color: #1c5fc4; font-weight: inherit; }
.maker i { width: 6px; height: 6px; border-radius: 50%; background: #222; align-self: flex-start; margin-top: 2px; }
.dwg { display: grid; grid-template-columns: 26px 1fr 26px; height: 26px; }
.dwg p { border-right: 2px solid #000; }
.dwg p:nth-child(2) { padding-top: 5px; }
.dwg p:last-child, .scale p:last-child { border: 0; }
.ident .scale { display: grid; grid-template-columns: 1fr 1fr; height: 14px; border: 0; text-align: center; }
.scale p { border-right: 2px solid #000; }

/* View controls */
.side { justify-self: end; overflow: hidden; width: 48px; }
.docctl { display: flex; align-items: flex-start; gap: 10px; height: 19px; }
.navbar { display: flex; flex-direction: column; align-items: center; justify-content: space-between; width: 40px; height: 202px; margin-left: 17px; padding: 3px 7px 4px 2px; border: 2px solid #b4b6b9; border-radius: 5px; background: #eff1f3; }
.navbar > button:first-child, .navbar > button:last-child { align-self: flex-end; }
.wheel { border-bottom: 1px solid #bbb; padding-bottom: 4px; }
.two-d { font: 700 9px "Liberation Sans", sans-serif; fill: #5b8fcb; }

/* Document tabs and status line */
.doctabs { display: flex; height: 30px; background: #d9d9d9; color: #666; }
.doctabs button { display: flex; align-items: center; gap: 11px; padding: 0 15px 0 10px; white-space: nowrap; }
.doctabs svg { color: #888; }
.doctabs .on { background: #f0f0f0; color: #1e90d2; border-bottom: 4px solid #36a9e1; padding: 0 9px 0 11px; }
.doctabs .menu { padding: 0; }
.status { display: flex; align-items: center; height: 30px; background: #eee; padding-left: 1px; }
.status .num { height: 28px; width: 39px; border-left: 1px solid #d4d4d4; padding: 4px 0 0 9px; }
.status .end { width: 34px; }
```
